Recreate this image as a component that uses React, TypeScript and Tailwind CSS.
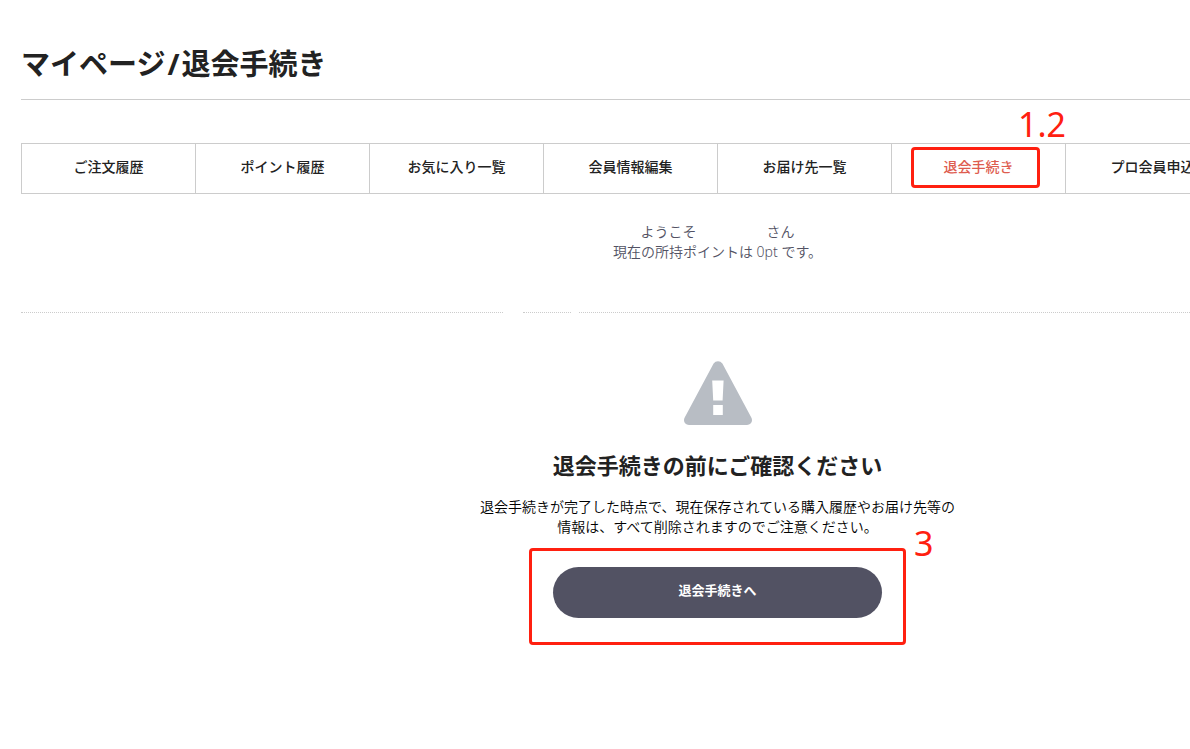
const tabs = [
    { label: 'ご注文履歴', href: '#history' },
    { label: 'ポイント履歴', href: '#point' },
    { label: 'お気に入り一覧', href: '#favorite' },
    { label: '会員情報編集', href: '#change' },
    { label: 'お届け先一覧', href: '#delivery' },
    { label: '退会手続き', href: '#withdraw', active: true },
    { label: 'プロ会員申込', href: '#pro' },
];

const WarningIcon = () => (
    <svg className="w-[68px] h-16" viewBox="0 0 68 64" aria-hidden="true">
        <path
            fill="#b8bdc4"
            fillRule="evenodd"
            d="M29.6 2.6C31.6-.7 36.4-.7 38.4 2.6L67.3 56.4C69.2 60 67 64 63 64H5C1 64-1.2 60 .7 56.4ZM28.2 19.5L29.2 39.5H38.6L39.6 19.5ZM29.2 44V54H38.8V44Z"
        />
    </svg>
);

const Tabs = () => (
    <nav>
        <ul className="grid grid-cols-8 border-l border-[#ccc]">
            {tabs.map((tab) => (
                <li key={tab.label} className="relative border-y border-r border-[#ccc]">
                    <a
                        href={tab.href}
                        className={`block pt-3 pb-4 text-center text-sm leading-[21px] font-medium ${tab.active ? 'text-[#de5d50]' : 'text-[#222]'}`}
                    >
                        {tab.label}
                    </a>
                    {tab.active && (
                        <>
                            <span className="absolute top-[3px] left-[19px] h-[41px] w-[129px] rounded-sm border-3 border-[#ff2010] pointer-events-none" />
                            <span className="absolute -top-10 left-[126px] text-[34px] leading-10 text-[#ff2010]">1.2</span>
                        </>
                    )}
                </li>
            ))}
        </ul>
    </nav>
);

export default function App() {
    return (
        <div className="min-h-screen overflow-hidden bg-white font-['Noto_Sans','Noto_Sans_CJK_JP',sans-serif] text-[#222]">
            <main className="mx-[21px] min-w-[1393px] pt-11 pb-24">
                <h1 className="border-b border-[#ccc] pb-[15px] text-[29px] leading-10 font-bold">
                    マイページ<span className="mx-0.5">/</span>退会手続き
                </h1>

                <div className="mt-[43px]">
                    <Tabs />
                </div>

                <div className="mt-7 text-center text-sm leading-5 font-[350] text-[#525263]">
                    <p className="flex justify-center gap-[70px]">
                        <span>ようこそ</span>
                        <span>さん</span>
                    </p>
                    <p>現在の所持ポイントは 0pt です。</p>
                </div>

                {/* Separador punteado en tres tramos */}
                <div className="mt-[50px] flex">
                    <span className="w-[482px] border-t border-dotted border-[#ccc]" />
                    <span className="ml-5 w-12 border-t border-dotted border-[#ccc]" />
                    <span className="ml-2 flex-1 border-t border-dotted border-[#ccc]" />
                </div>

                <section className="mt-12 flex flex-col items-center text-center">
                    <WarningIcon />
                    <h2 className="mt-[22px] text-[22px] leading-9 font-bold">退会手続きの前にご確認ください</h2>
                    <p className="mt-[14px] text-sm leading-5 font-[350] text-black">
                        退会手続きが完了した時点で、現在保存されている購入履歴やお届け先等の
                        <br />
                        情報は、すべて削除されますのでご注意ください。
                    </p>
                    <div className="relative mt-[11px] w-[377px] rounded-sm border-3 border-[#ff2010] px-[21px] pt-4 pb-6">
                        <button
                            type="button"
                            className="h-[51px] w-full rounded-full bg-[#525263] pb-1 text-[13px] font-bold text-white cursor-pointer"
                        >
                            退会手続きへ
                        </button>
                        <span className="absolute -top-7 left-[382px] text-[34px] leading-10 text-[#ff2010]">3</span>
                    </div>
                </section>
            </main>
        </div>
    );
}
